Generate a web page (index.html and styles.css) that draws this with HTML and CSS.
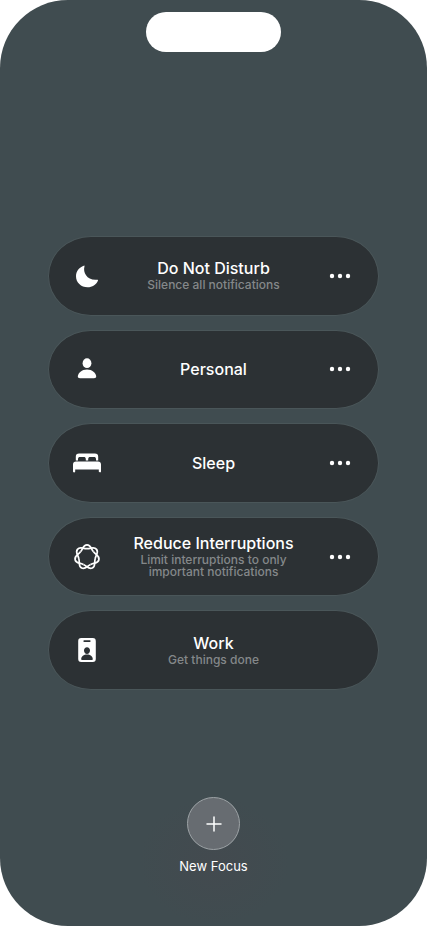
FILE: index.html
```html
<!DOCTYPE html>
<html lang="en">
  <head>
    <meta charset="utf-8">
    <meta name="viewport" content="width=device-width, initial-scale=1">
    <title>Focus</title>
    <link rel="stylesheet" href="styles.css">
  </head>
  <body>
    <div class="screen">
      <div class="island"></div>
      <ul class="focus-list">
        <li class="focus">
          <button class="focus-main">
            <svg class="icon" viewBox="0 0 30 30" fill="currentColor">
              <path d="M11.8 4.7C12.3 4.4 12.7 4.7 12.5 5.3C10.6 12 15.5 19.8 25.1 18.7C25.9 18.6 26.2 19 25.9 19.7C24.1 23.7 20.4 26.2 15.6 26.2C9 26.2 4 21.5 4 15.2C4 10.3 7 6.5 11.8 4.7Z"/>
            </svg>
            <span class="text">
              <span class="title">Do Not Disturb</span>
              <span class="subtitle">Silence all notifications</span>
            </span>
          </button>
          <button class="more" aria-label="More">
            <svg viewBox="0 0 22 6" fill="currentColor"><circle cx="3" cy="3" r="2.2"/><circle cx="11" cy="3" r="2.2"/><circle cx="19" cy="3" r="2.2"/></svg>
          </button>
        </li>
        <li class="focus">
          <button class="focus-main">
            <svg class="icon" viewBox="0 0 30 30" fill="currentColor">
              <ellipse cx="15" cy="9.2" rx="4.4" ry="4.9"/>
              <path d="M15 15.6C20 15.6 24.2 19 24.2 22.6C24.2 23.9 23.4 24.3 22 24.3H8C6.6 24.3 5.8 23.9 5.8 22.6C5.8 19 10 15.6 15 15.6Z"/>
            </svg>
            <span class="text">
              <span class="title">Personal</span>
            </span>
          </button>
          <button class="more" aria-label="More">
            <svg viewBox="0 0 22 6" fill="currentColor"><circle cx="3" cy="3" r="2.2"/><circle cx="11" cy="3" r="2.2"/><circle cx="19" cy="3" r="2.2"/></svg>
          </button>
        </li>
        <li class="focus">
          <button class="focus-main">
            <svg class="icon" viewBox="0 0 30 30" fill="currentColor">
              <path d="M3.8 12.6V8.8C3.8 6.6 4.9 5.5 7.1 5.5H22.9C25.1 5.5 26.2 6.6 26.2 8.8V12.6H24V11C24 9.5 23.2 8.9 22 8.9H18.2C17 8.9 16.2 9.5 16.2 11V12.6H13.8V11C13.8 9.5 13 8.9 11.8 8.9H8C6.8 8.9 6 9.5 6 11V12.6Z"/>
              <path d="M1 23.2V16.6C1 14.6 2.1 13.5 4.1 13.5H25.9C27.9 13.5 29 14.6 29 16.6V23.2C29 24 28.6 24.4 27.9 24.4C27.2 24.4 26.8 24 26.8 23.2V21.5H3.2V23.2C3.2 24 2.8 24.4 2.1 24.4C1.4 24.4 1 24 1 23.2Z"/>
            </svg>
            <span class="text">
              <span class="title">Sleep</span>
            </span>
          </button>
          <button class="more" aria-label="More">
            <svg viewBox="0 0 22 6" fill="currentColor"><circle cx="3" cy="3" r="2.2"/><circle cx="11" cy="3" r="2.2"/><circle cx="19" cy="3" r="2.2"/></svg>
          </button>
        </li>
        <li class="focus">
          <button class="focus-main">
            <svg class="icon" viewBox="-15 -15 30 30" fill="none" stroke="currentColor" stroke-width="1.7">
              <path id="lobe" d="M-6.5 -5.2C-3.6 -8.8 -4 -12.2 0 -12.2S3.6 -8.8 6.5 -5.2"/>
              <use href="#lobe" transform="rotate(51.43)"/>
              <use href="#lobe" transform="rotate(102.86)"/>
              <use href="#lobe" transform="rotate(154.29)"/>
              <use href="#lobe" transform="rotate(205.71)"/>
              <use href="#lobe" transform="rotate(257.14)"/>
              <use href="#lobe" transform="rotate(308.57)"/>
            </svg>
            <span class="text">
              <span class="title">Reduce Interruptions</span>
              <span class="subtitle">Limit interruptions to only important notifications</span>
            </span>
          </button>
          <button class="more" aria-label="More">
            <svg viewBox="0 0 22 6" fill="currentColor"><circle cx="3" cy="3" r="2.2"/><circle cx="11" cy="3" r="2.2"/><circle cx="19" cy="3" r="2.2"/></svg>
          </button>
        </li>
        <li class="focus">
          <button class="focus-main">
            <svg class="icon" viewBox="0 0 30 30" fill="currentColor">
              <path fill-rule="evenodd" d="M9.3 3H20.7C22.9 3 23.8 4 23.8 6.2V23.8C23.8 26 22.9 27 20.7 27H9.3C7.1 27 6.2 26 6.2 23.8V6.2C6.2 4 7.1 3 9.3 3ZM12.2 5.3C11.1 5.3 11.1 7 12.2 7H17.8C18.9 7 18.9 5.3 17.8 5.3ZM15 12.2C13.2 12.2 12 13.7 12 15.5C12 17.4 13.3 18.9 15 18.9S18 17.4 18 15.5C18 13.7 16.8 12.2 15 12.2ZM15 19.4C11.8 19.4 9.2 21.3 9.2 24.2C9.2 24.7 9.5 24.9 10 24.9H20C20.5 24.9 20.8 24.7 20.8 24.2C20.8 21.3 18.2 19.4 15 19.4Z"/>
            </svg>
            <span class="text">
              <span class="title">Work</span>
              <span class="subtitle">Get things done</span>
            </span>
          </button>
        </li>
      </ul>
      <div class="new-focus">
        <button class="add" id="add" aria-labelledby="add-label">
          <svg viewBox="0 0 16 16" stroke="currentColor" stroke-width="1.5" stroke-linecap="round"><path d="M8 1V15M1 8H15"/></svg>
        </button>
        <label class="add-label" id="add-label" for="add">New Focus</label>
      </div>
    </div>
  </body>
</html>
```
FILE: styles.css
```css
* {
  box-sizing: border-box;
}

body {
  margin: 0;
  background: #fff;
  font-family: Inter, "Liberation Sans", sans-serif;
  color: #fff;
}

button {
  border: 0;
  padding: 0;
  background: none;
  color: inherit;
  font: inherit;
  cursor: pointer;
}

.screen {
  display: flex;
  flex-direction: column;
  align-items: center;
  min-height: 100vh;
  padding: 12px 48px 0;
  border-radius: 68px;
  background: #404c50;
}

.island {
  width: 135px;
  height: 40px;
  border-radius: 20px;
  background: #fff;
}

.focus-list {
  display: grid;
  grid-auto-rows: 1fr;
  gap: 14px;
  width: 100%;
  min-height: 454px;
  margin: 184px 0 0;
  padding: 0;
  list-style: none;
}

.focus {
  display: grid;
  grid-template-columns: 1fr 76px;
  border: 1px solid #4a5659;
  border-radius: 43px / 50%;
  background: #2c3134;
}

.focus-main {
  display: grid;
  grid-template-columns: 76px 1fr;
  align-items: center;
}

.icon {
  width: 30px;
  height: 30px;
  justify-self: center;
}

.text {
  display: flex;
  flex-direction: column;
  align-items: center;
  gap: 1px;
}

.title {
  font-size: 16px;
  font-weight: 500;
  line-height: 20px;
}

.subtitle {
  max-width: 168px;
  padding-bottom: 2px;
  font-size: 12px;
  font-weight: 500;
  line-height: 12px;
  color: #84888a;
}

.more {
  display: flex;
  align-items: center;
  justify-content: center;
}

.more svg {
  width: 22px;
  height: 6px;
}

.new-focus {
  display: flex;
  flex-direction: column;
  align-items: center;
  gap: 8px;
  width: 150px;
  margin-top: auto;
  padding-bottom: 52px;
  background: radial-gradient(closest-side, #434a4f, #404c50);
}

.add {
  display: flex;
  align-items: center;
  justify-content: center;
  width: 53px;
  height: 53px;
  border: 1px solid #9da3a6;
  border-radius: 50%;
  background: #676c71;
}

.add svg {
  width: 16px;
  height: 16px;
}

.add-label {
  font-size: 13px;
  line-height: 16px;
}
```
